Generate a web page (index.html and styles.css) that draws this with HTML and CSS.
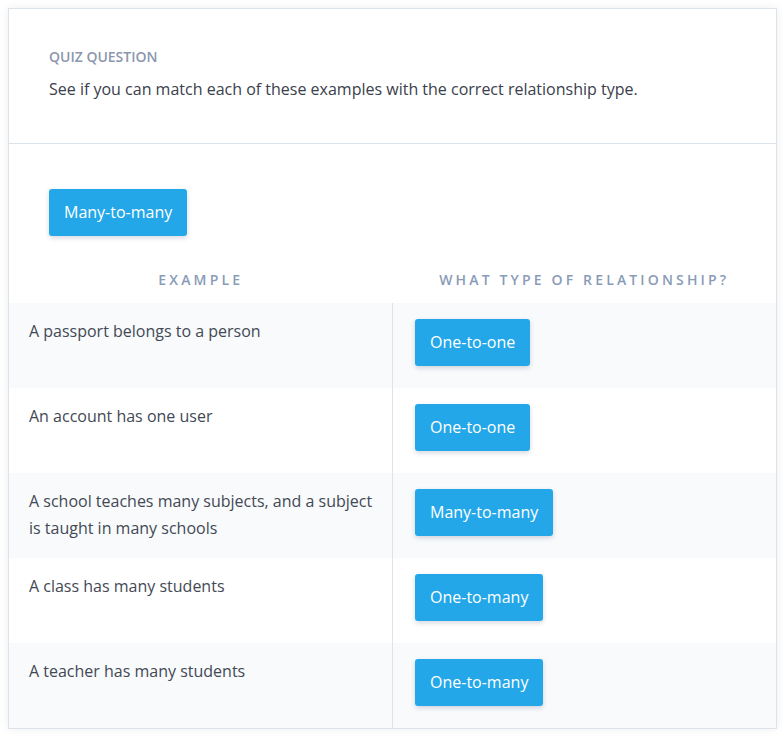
FILE: index.html
```html
<!DOCTYPE html>
<html>
<head>
<meta charset="utf-8">
<link rel="stylesheet" href="styles.css">
</head>
<body>
<div class="card">
  <div class="question">
    <div class="label">QUIZ QUESTION</div>
    <div class="prompt">See if you can match each of these examples with the correct relationship type.</div>
  </div>
  <div class="body">
    <div class="pool">
      <span class="chip">Many-to-many</span>
    </div>
    <div class="table">
      <div class="head">
        <div class="hcell">EXAMPLE</div>
        <div class="hcell">WHAT TYPE OF RELATIONSHIP?</div>
      </div>
      <div class="row alt">
        <div class="ex">A passport belongs to a person</div>
        <div class="ans"><span class="chip">One-to-one</span></div>
      </div>
      <div class="row">
        <div class="ex">An account has one user</div>
        <div class="ans"><span class="chip">One-to-one</span></div>
      </div>
      <div class="row alt">
        <div class="ex">A school teaches many subjects, and a subject is taught in many schools</div>
        <div class="ans"><span class="chip">Many-to-many</span></div>
      </div>
      <div class="row">
        <div class="ex">A class has many students</div>
        <div class="ans"><span class="chip">One-to-many</span></div>
      </div>
      <div class="row alt">
        <div class="ex">A teacher has many students</div>
        <div class="ans"><span class="chip">One-to-many</span></div>
      </div>
    </div>
  </div>
</div>
</body>
</html>
```

FILE: styles.css
```css
html, body {
  margin: 0;
  padding: 0;
  background: #ffffff;
}
body {
  padding: 8px 6px 8px 8px;
  font-family: "Open Sans", "Noto Sans", sans-serif;
  color: #3d4451;
}
.card {
  width: 769px;
  box-sizing: border-box;
  border: 1px solid #dde3ec;
  background: #ffffff;
  box-shadow: 0 0 8px rgba(40, 50, 70, 0.08);
}
.question {
  padding: 38px 40px 41px;
  border-bottom: 1px solid #dde3ec;
}
.label {
  font-size: 14px;
  line-height: 20px;
  font-weight: 600;
  color: #8a97ad;
  margin-bottom: 9px;
}
.prompt {
  font-size: 16px;
  line-height: 26px;
  color: #3a404c;
}
.body {
  padding-top: 45px;
}
.pool {
  padding: 0 40px;
  height: 47px;
  margin-bottom: 21px;
  display: flex;
}
.chip {
  display: inline-flex;
  align-items: center;
  height: 47px;
  box-sizing: border-box;
  padding: 0 15px 1px;
  background: #23a7e9;
  color: #ffffff;
  font-size: 16px;
  border-radius: 3px;
  box-shadow: 0 2px 5px rgba(20, 40, 70, 0.18);
}
.head {
  display: flex;
  height: 46px;
}
.hcell {
  flex: 1;
  display: flex;
  align-items: center;
  justify-content: center;
  padding-bottom: 2px;
  font-size: 14px;
  font-weight: 600;
  letter-spacing: 3.15px;
  color: #8a9bb7;
}
.row {
  display: flex;
  height: 85px;
}
.row.alt {
  background: #f8fafc;
}
.ex {
  width: 383px;
  box-sizing: border-box;
  padding: 15px 8px 0 20px;
  font-size: 16px;
  line-height: 27px;
  color: #434954;
}
.ans {
  flex: 1;
  border-left: 1px solid #dde3ec;
  padding: 16px 22px 0;
}
```
